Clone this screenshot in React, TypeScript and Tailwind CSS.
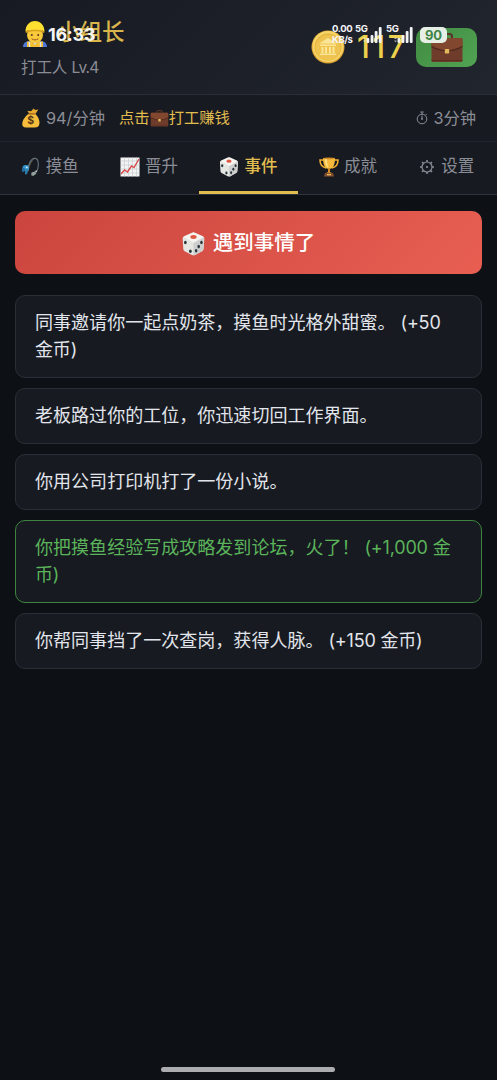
import { useState } from "react";
import clsx from "clsx";

type IconProps = { className?: string };

const Worker = ({ className }: IconProps) => (
  <svg viewBox="0 0 26 26" className={className}>
    <path d="M1 26c0-4 3-6 7-6h10c4 0 7 2 7 6z" fill="#4d78d8" />
    <path d="M5 20.500h4.500l3.500 3 3.500-3H21V26H5z" fill="#f5bd2b" />
    <path d="M9.800 19.500h6.400L13 24z" fill="#e9edf2" />
    <path d="M7.500 21v5M18.500 21v5" stroke="#dfe5e9" strokeWidth="1.500" />
    <ellipse cx="13" cy="14" rx="8" ry="8.300" fill="#f8c93a" />
    <path d="M3.500 10.500C3.500 4.500 7.500 0 13 0s9.500 4.500 9.500 10.500C19 8.500 7 8.500 3.500 10.500z" fill="#ffdf2f" />
    <path d="M3.500 10.500C7 8.200 19 8.200 22.500 10.500l-.4 1.500C18 9.500 8 9.500 3.900 12z" fill="#d8a21e" />
    <circle cx="9.800" cy="14" r="1" fill="#5b3b1c" />
    <circle cx="16.200" cy="14" r="1" fill="#5b3b1c" />
    <path d="M10 18c1.800 1.300 4.200 1.300 6 0" fill="none" stroke="#9c5423" strokeWidth="1" strokeLinecap="round" />
  </svg>
);

const Coin = ({ className }: IconProps) => (
  <svg viewBox="0 0 34 34" className={className}>
    <circle cx="17" cy="17" r="16.500" fill="#dea635" />
    <circle cx="17" cy="16.500" r="15.500" fill="#f6d568" />
    <circle cx="17" cy="17" r="13.500" fill="#e7b23d" />
    <circle cx="17" cy="17.500" r="12.700" fill="#efc350" />
    <path d="M8 13.500L17 8l9 5.500zM9 14.500h16v1.500H9zM10.500 17h2v6h-2zM14 17h2v6h-2zM18 17h2v6h-2zM21.500 17h2v6h-2zM9 23.500h16V25H9z" fill="#fbe596" />
  </svg>
);

const Briefcase = ({ className }: IconProps) => (
  <svg viewBox="0 0 32 30" className={className}>
    <path d="M11 5V3.500C11 1.500 12 1 13.500 1h5C20 1 21 1.500 21 3.500V5" fill="none" stroke="#5a3228" strokeWidth="2" />
    <rect x=".5" y="5" width="31" height="24" rx="1.500" fill="#6f3c2c" />
    <path d="M.5 6.500Q.5 5 2 5h28q1.500 0 1.500 1.500V13Q16 22 .5 13z" fill="#82472f" />
    <path d="M.5 13.500Q16 22 31.500 13.500" fill="none" stroke="#4c281e" strokeWidth="1.300" />
    <rect x="13.800" y="16" width="4.400" height="4.500" rx=".8" fill="#e4b95b" />
    <path d="M.5 27.500h31" stroke="#57301f" />
  </svg>
);

const MoneyBag = ({ className }: IconProps) => (
  <svg viewBox="0 0 18 19" className={className}>
    <path d="M7 5L5.500 2.500 9 3l2.500-2.500L13 2l3-.5L13 6z" fill="#e7a92f" />
    <path d="M7 5.500h6c2.500 2.500 4.500 6 4 9.500-.3 2.700-2 3.500-4.500 3.500h-8C1.800 18.500.5 17.500.7 15 1 11 4 7.500 7 5.500z" fill="#f5bd3b" />
    <path d="M6.700 5.600h6.500" stroke="#a86820" strokeWidth="1.300" />
    <text x="8.800" y="15.500" textAnchor="middle" fontSize="10" fontWeight="700" fill="#573517">$</text>
  </svg>
);

const FishingPole = ({ className }: IconProps) => (
  <svg viewBox="0 0 20 20" className={className} fill="none">
    <path d="M6.500 15C7 7 10 1.500 13.500 1.200S18 6 17 11c-.4 3-1.500 4.500-3 6" stroke="#65747b" strokeWidth="1.100" />
    <path d="M7 14C8 8 10.500 4 13.500 1.200" stroke="#857a62" strokeWidth=".7" />
    <path d="M10.500 15.500l3.500-1 1.200 2.200-3 2.300-2-.8z" fill="#91a39a" />
    <path d="M13.500 14.500l2-1.500.5 2z" fill="#cad3cf" />
    <ellipse cx="4.800" cy="11" rx="3.300" ry="2.900" fill="#3a9bd1" />
    <path d="M1.500 10l3 2-1.500 3-2.300-.5z" fill="#236d9c" />
    <path d="M4 13l3-1-.8 5-2.200.5z" fill="#287ca9" />
    <circle cx="5.800" cy="10.300" r=".9" fill="#d7eff8" />
  </svg>
);

const Chart = ({ className }: IconProps) => (
  <svg viewBox="0 0 20 20" className={className}>
    <rect x=".5" y=".5" width="19" height="19" fill="#f2f3f2" />
    <path d="M4.500.5v19M8.500.5v19M12.500.5v19M16.500.5v19M.5 4h19M.5 8h19M.5 12h19M.5 16h19" stroke="#c6ced1" strokeWidth=".7" />
    <path d="M1 17l3.500-4 3 2 4-6 2.500 1.500L19 2" fill="none" stroke="#d94a4c" strokeWidth="1.400" />
  </svg>
);

const Dice = ({ className }: IconProps) => (
  <svg viewBox="0 0 22 23" className={className}>
    <path d="M9.500.6q1.500-.7 3 0l7.500 3.500q1.500.7 1.400 2.300l-.7 10q-.2 1.300-1.400 2L12.500 22q-1.500.8-3 0l-7-3.600q-1.200-.6-1.300-2L.6 6.300Q.5 4.700 2 4z" fill="#e5e5e2" />
    <path d="M11 10.500l10-5-.7 11q-.2 1.300-1.400 2L12.500 22q-.8.400-1.500.4z" fill="#cdcecd" />
    <path d="M1.500 4.500L11 .5l9.500 4L11 10z" fill="#f6f5f1" />
    <ellipse cx="11" cy="4.800" rx="3" ry="1.900" fill="#df5a45" />
    <ellipse cx="3.200" cy="10" rx="1.300" ry="1.700" fill="#26343a" />
    <ellipse cx="8" cy="18.500" rx="1.300" ry="1.700" fill="#26343a" />
    <ellipse cx="18.600" cy="10" rx="1.200" ry="1.700" fill="#26343a" />
    <ellipse cx="16" cy="14" rx="1.200" ry="1.700" fill="#26343a" />
    <ellipse cx="13.500" cy="18" rx="1.200" ry="1.700" fill="#26343a" />
  </svg>
);

const Trophy = ({ className }: IconProps) => (
  <svg viewBox="0 0 20 20" className={className}>
    <path d="M5 3H1c0 5 2 7 6 8M15 3h4c0 5-2 7-6 8" fill="none" stroke="#efad32" strokeWidth="1.600" />
    <path d="M4 1h12c0 6-1.500 11-6 11S4 7 4 1z" fill="#f5b93b" />
    <path d="M6 2h2c0 4 .5 7 1.500 9C7 10 6 6 6 2z" fill="#ffe08a" />
    <path d="M9 11h2v4l2 1H7l2-1z" fill="#d28c28" />
    <path d="M6 16h8l1 3.500H5z" fill="#84502f" />
    <path d="M8 17h4v1.300H8z" fill="#e6bd5a" />
    <ellipse cx="10" cy="1.400" rx="6" ry=".9" fill="#d28c28" />
  </svg>
);

const Stopwatch = ({ className }: IconProps) => (
  <svg viewBox="0 0 12 14" className={className} fill="none" stroke="currentColor" strokeWidth="1">
    <circle cx="6" cy="8" r="4.800" />
    <path d="M6 8V4.500M6 3V1M4.300 1h3.400M9.700 4l1-1" />
    <circle cx="6" cy="8" r=".6" />
  </svg>
);

const Gear = ({ className }: IconProps) => (
  <svg viewBox="0 0 14 14" className={className} fill="none" stroke="currentColor">
    <circle cx="7" cy="7" r="5" strokeWidth="1.200" />
    <circle cx="7" cy="7" r="1.100" fill="currentColor" stroke="none" />
    <path d="M7 0v2M7 12v2M0 7h2M12 7h2M2 2l1.500 1.500M10.500 10.500L12 12M12 2l-1.500 1.500M3.500 10.500L2 12" strokeWidth="1.500" />
  </svg>
);

const Signal = ({ className }: IconProps) => (
  <svg viewBox="0 0 19 16" className={className} fill="#f1f3f5">
    <path d="M0 12l1.500-2L3 12zM0 13.500h3l-1.500 2z" opacity=".6" />
    <rect x="3.500" y="11" width="2.800" height="5" rx="1" />
    <rect x="7.600" y="8" width="2.800" height="8" rx="1" />
    <rect x="11.700" y="4" width="2.800" height="12" rx="1" />
    <rect x="15.800" y="0" width="2.800" height="16" rx="1" />
  </svg>
);

const tabs = [
  { id: "fish", label: "摸鱼", icon: <FishingPole className="w-5 h-5" /> },
  { id: "promote", label: "晋升", icon: <Chart className="w-5 h-5" /> },
  { id: "events", label: "事件", icon: <Dice className="w-5 h-5" /> },
  { id: "awards", label: "成就", icon: <Trophy className="w-5 h-5" /> },
  { id: "settings", label: "设置", icon: <Gear className="w-[14px] h-[14px] mr-[2px]" /> },
];

const events = [
  { text: "同事邀请你一起点奶茶，摸鱼时光格外甜蜜。", reward: "(+50 金币)" },
  { text: "老板路过你的工位，你迅速切回工作界面。" },
  { text: "你用公司打印机打了一份小说。" },
  { text: "你把摸鱼经验写成攻略发到论坛，火了！", reward: "(+1,000 金币)", rare: true },
  { text: "你帮同事挡了一次查岗，获得人脉。", reward: "(+150 金币)" },
];

const StatusBar = () => (
  <div className="absolute inset-x-0 top-0 h-[50px] text-[#f4f5f7] font-bold pointer-events-none">
    <span className="absolute left-[48px] top-[25px] text-[18px] leading-[20px] tracking-[-0.3px]">16:33</span>
    <span className="absolute left-[332px] top-[24px] text-[9.500px] leading-[10.500px] tracking-[-0.4px]">
      0.00
      <br />
      KB/s
    </span>
    <span className="absolute left-[355px] top-[24px] text-[9.500px] leading-[10.500px] tracking-[-0.4px]">5G</span>
    <Signal className="absolute left-[363px] top-[27px] w-[19px] h-[16px]" />
    <span className="absolute left-[386px] top-[24px] text-[9.500px] leading-[10.500px] tracking-[-0.4px]">5G</span>
    <Signal className="absolute left-[394px] top-[27px] w-[19px] h-[16px]" />
    <span className="absolute left-[420px] top-[27px] w-[27px] h-[16px] rounded-[5px] bg-[#e5efe6] text-[#3f8447] text-[13px] leading-[16px] text-center">
      90
    </span>
  </div>
);

const App = () => {
  const [active, setActive] = useState("events");

  return (
    <div className="relative w-full h-[1080px] overflow-hidden bg-[#0d1116] text-[#8b8d96] font-['Inter','Noto_Sans_CJK_SC',sans-serif]">
      <header className="flex justify-between h-[94px] pl-[21px] pr-[20px] bg-[linear-gradient(135deg,#171a22,#21252e)]">
        <div className="pt-[17px]">
          <div className="flex items-center h-[30px] gap-[10px]">
            <Worker className="w-[26px] h-[26px] mt-[3px] ml-[1px] -mr-[1px]" />
            <h1 className="text-[22.500px] leading-[30px] font-medium text-[#d9b64c]">小组长</h1>
          </div>
          <p className="mt-[10px] text-[15.500px] leading-[22px] tracking-[-0.1px]">
            打工人 <span className="tracking-[-0.8px]">Lv.4</span>
          </p>
        </div>
        <div className="flex items-start pt-[28px]">
          <Coin className="w-[34px] h-[34px] mt-[2px]" />
          <span className="w-[71px] pl-[12px] text-[31px] leading-[38px] tracking-[2.500px] font-medium text-[#ecd04b]">
            117
          </span>
          <button className="flex items-center justify-center w-[61px] h-[39px] rounded-[10px] bg-[linear-gradient(135deg,#418b43,#51a352)]">
            <Briefcase className="w-8 h-[30px]" />
          </button>
        </div>
      </header>

      <div className="flex items-center justify-between h-[47px] pl-[21px] pr-[21px] border-t border-[#2b2e37] bg-[#171a21]">
        <div className="flex items-center">
          <MoneyBag className="w-[20px] h-[20px]" />
          <span className="ml-[5px] text-[16.300px]">94/分钟</span>
          <span className="flex items-center ml-[14px] text-[15.300px] text-[#e1bd50]">
            点击
            <Briefcase className="w-[19px] h-[17px]" />
            打工赚钱
          </span>
        </div>
        <div className="flex items-center gap-[5px] text-[16.300px]">
          <Stopwatch className="w-[12px] h-[14px]" />
          3分钟
        </div>
      </div>

      <nav className="grid grid-cols-5 h-[54px] border-y border-t-[#20242c] border-b-[#30333c] bg-[#171a21]">
        {tabs.map((tab) => (
          <button
            key={tab.id}
            onClick={() => setActive(tab.id)}
            className={clsx(
              "flex items-center justify-center gap-[5px] text-[16.500px] border-b-[3px]",
              active === tab.id ? "border-[#e2bd50] text-[#e1bd50] font-medium" : "border-transparent"
            )}
          >
            {tab.icon}
            {tab.label}
          </button>
        ))}
      </nav>

      <main className="px-[15px] pt-4">
        <button className="flex items-center justify-center gap-[8px] w-full h-[63px] pt-[2px] rounded-[10px] bg-[linear-gradient(135deg,#cb453e,#e85f52)] text-[20.500px] font-medium text-white">
          <Dice className="w-[23px] h-[24px]" />
          遇到事情了
        </button>

        <ul className="flex flex-col gap-[10.500px] mt-[21px]">
          {events.map((event) => (
            <li
              key={event.text}
              className={clsx(
                "px-[19px] py-[13.250px] border rounded-[10px] bg-[#171a21] text-[18.050px] leading-[27px]",
                event.rare ? "border-[#3d853f] text-[#5bb45a]" : "border-[#2b2e36] text-[#e2e5eb]"
              )}
            >
              {event.text}
              {event.reward && <span className="tracking-[-0.2px]"> {event.reward}</span>}
            </li>
          ))}
        </ul>
      </main>

      <StatusBar />
      <div className="absolute left-[161px] top-[1067px] w-[174px] h-[5px] rounded-full bg-[#aaacb0]" />
    </div>
  );
};

export default App;
